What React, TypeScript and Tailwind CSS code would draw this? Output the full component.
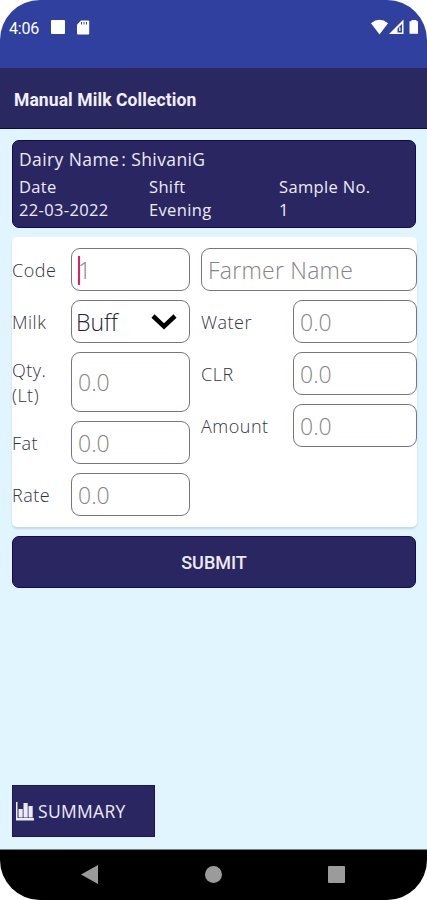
import React from 'react'
import { clsx } from 'clsx'

const Field = ({ label, tall = false, labelClass = "w-[59px]", children }: { label: string, tall?: boolean, labelClass?: string, children: React.ReactNode }) => (
  <div className={clsx("flex items-center", tall ? "h-[60px]" : "h-[43px]")}>
    <span className={clsx("shrink-0 whitespace-pre-line pt-px text-[18px] leading-[25px] tracking-[0.5px] font-light text-[#34343f]", labelClass)}>{label}</span>
    <div className="flex-1 h-full min-w-0 flex items-center rounded-[9px] border border-[#75738f] px-[6px] pt-px text-[23px] font-light text-[#858585]">
      {children}
    </div>
  </div>
)

const StatusBar = () => (
  <header className="h-[68px] bg-[#30409f] flex items-start justify-between pt-[18px] pl-[9px] pr-[7px] text-white">
    <div className="flex items-center h-5">
      <span className="w-[42px] pt-px text-[16px] leading-5 tracking-[-0.2px] font-[Roboto,sans-serif]">4:06</span>
      <span className="size-[14px] rounded-[1px] bg-white -mt-[2px]" />
      <svg className="ml-[11px] -mt-px" width="14" height="15" viewBox="0 0 14 15">
        <path d="M5 0.5h7.2a1 1 0 0 1 1 1v12a1 1 0 0 1-1 1H2a1 1 0 0 1-1-1V4.8z" fill="white" />
        <path d="M5.5 2v2.500M8 2v2.500M10.5 2v2.500" stroke="#30409f" strokeWidth="1" />
      </svg>
    </div>
    <svg width="50" height="20" viewBox="0 0 50 20" fill="white">
      <path d="M1 5.200Q9.5-1.600 18 5.200L9.5 16.500z" />
      <path fillRule="evenodd" d="M19 16L33.500 1.500V16zM27.500 14.500h4.500V6L27.500 10.500z" />
      <path d="M29.800 9.500v3.500" stroke="white" strokeWidth="1.200" />
      <path d="M41.500 2h5v1.200H48V15.800h-8.500V3.200h2z" />
    </svg>
  </header>
)

export default function App() {
  return (
    <div className="bg-white w-[427px] h-[900px]">
      <main className="w-full h-full flex flex-col overflow-hidden rounded-[40px] bg-[#e0f5ff] font-['Open_Sans',sans-serif]">
        <StatusBar />
        <h1 className="h-[61px] shrink-0 bg-[#2a2860] border-b border-[#0b0a4a] flex items-center pl-[14px] pt-[4px] text-[17.5px] font-bold text-[#f1f0fa] tracking-[0.09px] font-[Roboto,sans-serif]">
          Manual Milk Collection
        </h1>

        <div className="flex-1 flex flex-col pl-3 pr-[11px] pt-[11px] pb-3">
          <section className="h-[88px] rounded-[7px] border border-[#0e0b57] bg-[#2a2662] px-[6px] pt-[6px] text-[16.500px] tracking-[0.35px] text-[#edebf6]">
            <p className="text-[17.500px] leading-6 tracking-[0.4px]">Dairy Name<span className="ml-[2px]">:</span> ShivaniG</p>
            <div className="mt-[4px] grid grid-cols-3 leading-[23px]">
              <div>Date<br />22-03-2022</div>
              <div>Shift<br />Evening</div>
              <div>Sample No.<br />1</div>
            </div>
          </section>

          <section className="mt-[9px] -mr-px h-[290px] rounded-[5px] bg-white shadow-[0_2px_2px_#c4d9de] flex gap-[11px] pt-[11px]">
            <div className="w-[178px] flex flex-col gap-[9px]">
              <Field label="Code">
                <span className="w-[2px] h-[29px] bg-[#e9196b]" />
                <span className="-ml-[2px]">1</span>
              </Field>
              <Field label="Milk">
                <span className="flex-1 -ml-[2px] text-[#26263a]">Buff</span>
                <svg className="mr-[6px]" width="26" height="16" viewBox="0 0 26 16" fill="none" stroke="black" strokeWidth="4.500">
                  <path d="M2 2l11 10.500L24 2" />
                </svg>
              </Field>
              <Field label={"Qty.\n(Lt)"} tall>0.0</Field>
              <Field label="Fat">0.0</Field>
              <Field label="Rate">0.0</Field>
            </div>
            <div className="flex-1 flex flex-col gap-[9px]">
              <div className="h-[43px] flex items-center rounded-[9px] border border-[#75738f] px-[6px] pt-px text-[23px] tracking-[0.25px] font-light text-[#858585]">Farmer Name</div>
              <Field label="Water" labelClass="w-[92px]">0.0</Field>
              <Field label="CLR" labelClass="w-[92px]">0.0</Field>
              <Field label="Amount" labelClass="w-[92px]">0.0</Field>
            </div>
          </section>

          <button className="mt-[9px] h-[52px] rounded-[7px] border border-[#0e0b57] bg-[#2a2662] text-[18px] font-medium text-[#edebf6] font-[Roboto,sans-serif]">
            SUBMIT
          </button>

          <button className="mt-auto w-[143px] h-[52px] border border-[#1b1760] bg-[#2a2662] flex items-center pl-[3px] gap-[4px] text-[17.500px] tracking-[0.3px] text-[#edebf6]">
            <svg className="-mt-px" width="18" height="20" viewBox="0 0 18 20" fill="#edebf6">
              <path d="M0 1h1.500v16H18v2.500H0zM2.500 8h4.200v8.500H2.500zM7.500 2h4.200v14.500H7.500zM12.500 5h4.200v11.500h-4.200z" />
            </svg>
            SUMMARY
          </button>
        </div>

        <nav className="h-[51px] bg-black border-t border-[#77817f] flex items-center justify-between pb-[2px] pl-[81px] pr-[82px]">
          <svg width="17" height="19" viewBox="0 0 17 19"><path d="M0 9.500L17 0v19z" fill="#9b9b9b" /></svg>
          <span className="size-[17px] rounded-full bg-[#9b9b9b]" />
          <span className="size-[17px] rounded-[1px] bg-[#9b9b9b]" />
        </nav>
      </main>
    </div>
  )
}
